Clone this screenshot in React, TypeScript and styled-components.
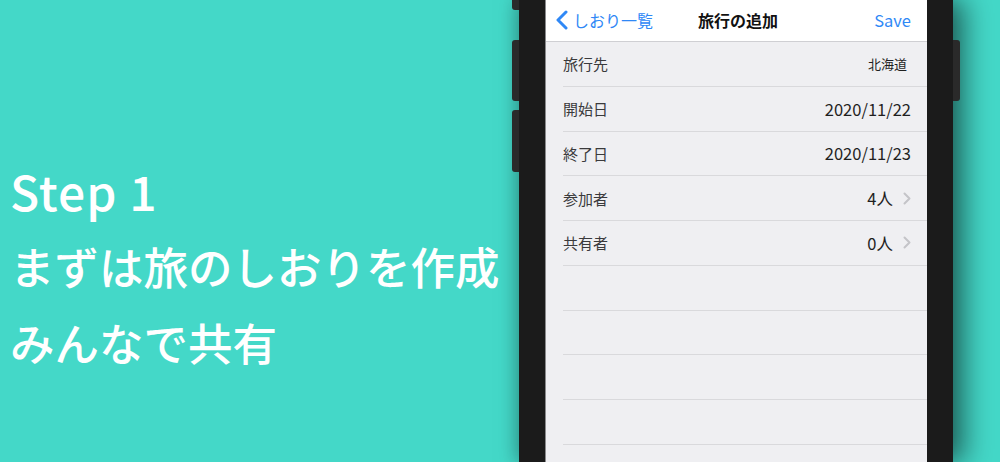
import React from 'react';
import styled, { createGlobalStyle } from 'styled-components';

const GlobalStyle = createGlobalStyle`
  html, body {
    margin: 0;
    padding: 0;
    width: 1000px;
    height: 462px;
    overflow: hidden;
  }
  * { box-sizing: border-box; }
`;

const FONT = `'Noto Sans CJK JP', 'Noto Sans', sans-serif`;

const Page = styled.div`
  width: 1000px;
  height: 462px;
  display: flex;
  background: #44d8c8;
  overflow: hidden;
  font-family: ${FONT};
`;

const Caption = styled.div`
  width: 519px;
  flex-shrink: 0;
  display: flex;
  flex-direction: column;
  padding: 152px 0 0 10px;
  color: #ffffff;
`;

const CaptionLine = styled.div<{ $latin?: boolean }>`
  font-size: ${(p) => (p.$latin ? '48px' : '44.5px')};
  letter-spacing: ${(p) => (p.$latin ? '1px' : '0')};
  line-height: 76px;
  font-weight: 500;
  white-space: nowrap;
`;

const Phone = styled.div`
  position: relative;
  width: 434px;
  height: 462px;
  flex-shrink: 0;
  background: #1b1b1b;
  padding: 0 26px 0 26px;
  box-shadow: 12px 0 26px rgba(0, 0, 0, 0.5), -4px 0 16px rgba(0, 0, 0, 0.2);
`;

const SideButton = styled.div<{ $top: number; $height: number; $side: 'left' | 'right' }>`
  position: absolute;
  top: ${(p) => p.$top}px;
  height: ${(p) => p.$height}px;
  width: 7px;
  background: #2a2a2a;
  ${(p) => (p.$side === 'left' ? 'left: -7px; border-radius: 3px 0 0 3px;' : 'right: -7px; border-radius: 0 3px 3px 0;')}
`;

const Screen = styled.div`
  width: 382px;
  height: 100%;
  background: #efeff2;
  border-left: 1px solid #8a8a8c;
  display: flex;
  flex-direction: column;
  overflow: hidden;
`;

const NavBar = styled.div`
  height: 42px;
  flex-shrink: 0;
  background: #ffffff;
  border-bottom: 1px solid #cfcfd3;
  display: grid;
  grid-template-columns: 1fr auto 1fr;
  align-items: center;
  padding: 0 16px 2px 16px;
  font-size: 16px;
`;

const BackButton = styled.div`
  display: flex;
  align-items: center;
  gap: 5px;
  margin-left: -7px;
  color: #2f88f6;
`;

const NavTitle = styled.div`
  font-weight: 700;
  color: #111111;
  padding-left: 3px;
`;

const SaveButton = styled.div`
  justify-self: end;
  color: #2f88f6;
  font-size: 16.5px;
`;

const Row = styled.div`
  height: 44.75px;
  flex-shrink: 0;
  margin-left: 17px;
  padding-right: 16px;
  border-bottom: 1px solid #d9d9dc;
  display: flex;
  align-items: center;
  justify-content: space-between;
`;

const Label = styled.span`
  font-size: 15px;
  color: #3a3a3c;
`;

const Value = styled.span<{ $small?: boolean }>`
  display: flex;
  align-items: center;
  gap: 10px;
  font-size: ${(p) => (p.$small ? '13px' : '16.5px')};
  color: #1f1f1f;
  padding-right: ${(p) => (p.$small ? '4px' : '0')};
`;

const BackChevron = () => (
  <svg width="13" height="20" viewBox="0 0 13 20">
    <polyline points="11,2 3,10 11,18" fill="none" stroke="#2f88f6" strokeWidth="3" strokeLinecap="round" strokeLinejoin="round" />
  </svg>
);

const Disclosure = () => (
  <svg width="8" height="13" viewBox="0 0 8 13">
    <polyline points="1.5,1.5 6.5,6.5 1.5,11.5" fill="none" stroke="#c4c4c8" strokeWidth="2" strokeLinecap="round" strokeLinejoin="round" />
  </svg>
);

type Item = { label: string; value: string; small?: boolean; disclosure?: boolean };

const items: Item[] = [
  { label: '旅行先', value: '北海道', small: true },
  { label: '開始日', value: '2020/11/22' },
  { label: '終了日', value: '2020/11/23' },
  { label: '参加者', value: '4人', disclosure: true },
  { label: '共有者', value: '0人', disclosure: true },
];

const App: React.FC = () => {
  return (
    <Page>
      <GlobalStyle />
      <Caption>
        <CaptionLine $latin>Step 1</CaptionLine>
        <CaptionLine>まずは旅のしおりを作成</CaptionLine>
        <CaptionLine>みんなで共有</CaptionLine>
      </Caption>

      <Phone>
        <SideButton $side="left" $top={-20} $height={30} />
        <SideButton $side="left" $top={40} $height={61} />
        <SideButton $side="left" $top={110} $height={62} />
        <SideButton $side="right" $top={40} $height={61} />

        <Screen>
          <NavBar>
            <BackButton>
              <BackChevron />
              しおり一覧
            </BackButton>
            <NavTitle>旅行の追加</NavTitle>
            <SaveButton>Save</SaveButton>
          </NavBar>

          {items.map((item) => (
            <Row key={item.label}>
              <Label>{item.label}</Label>
              <Value $small={item.small}>
                {item.value}
                {item.disclosure && <Disclosure />}
              </Value>
            </Row>
          ))}
          {[0, 1, 2, 3, 4].map((i) => (
            <Row key={`empty-${i}`} />
          ))}
        </Screen>
      </Phone>
    </Page>
  );
};

export default App;
